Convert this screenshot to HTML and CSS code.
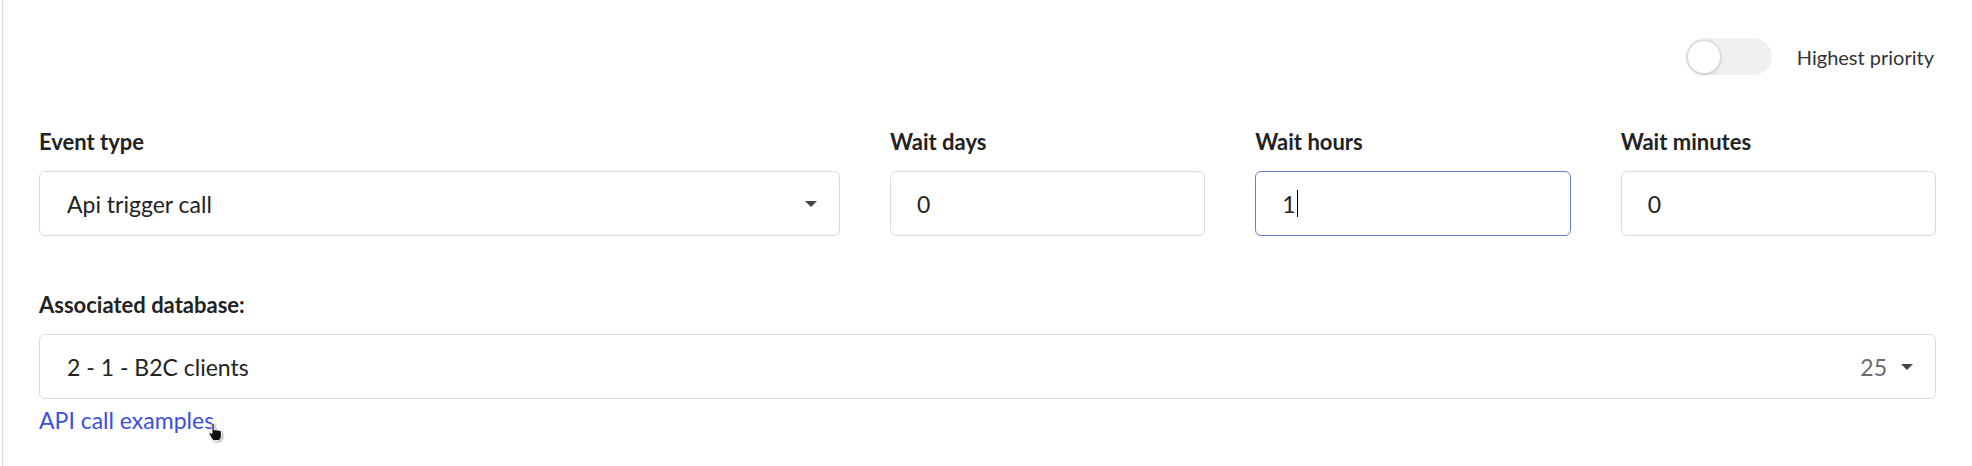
FILE: index.html
```html
<!DOCTYPE html>
<html lang="en">
<head>
  <meta charset="UTF-8" />
  <meta name="viewport" content="width=device-width, initial-scale=1.0"/>
  <title>Event settings</title>
  <link rel="stylesheet" href="styles.css">
</head>
<body>

  <div class="panel">
    <div class="priority-row">
      <div class="switch"><span class="knob"></span></div>
      <span class="switch-label">Highest priority</span>
    </div>

    <div class="event-grid">
      <div class="field">
        <label>Event type</label>
        <div class="box select">
          <span>Api trigger call</span>
          <span class="arrow"></span>
        </div>
      </div>
      <div class="field">
        <label>Wait days</label>
        <div class="box">0</div>
      </div>
      <div class="field">
        <label>Wait hours</label>
        <div class="box focused">1<span class="caret"></span></div>
      </div>
      <div class="field">
        <label>Wait minutes</label>
        <div class="box">0</div>
      </div>
    </div>

    <div class="field db-field">
      <label>Associated database:</label>
      <div class="box select">
        <span>2 - 1 - B2C clients</span>
        <span class="select-end"><span class="count">25</span><span class="arrow"></span></span>
      </div>
    </div>

    <div class="link-wrap">
      <a href="#" class="api-link">API call examples</a>
      <!-- mouse pointer from the screenshot -->
      <svg class="pointer" width="18" height="20" viewBox="0 0 18 20">
        <path d="M5.5 1.2c1 0 1.7.7 1.7 1.6v5.4c.6-.8 2-.8 2.5.1.7-.7 2.1-.5 2.5.4.8-.5 2.2 0 2.2 1.1v4c0 2.4-1.4 4.8-3.4 4.8H7.6c-1.3 0-2.2-.8-2.9-2L2.2 12.2c-.6-1 .6-2.2 1.7-1.4l1 .9V2.8c0-.9.3-1.6.6-1.6z"
              fill="#111" stroke="#fff" stroke-width="1" stroke-linejoin="round"/>
      </svg>
    </div>
  </div>

</body>
</html>
```

FILE: styles.css
```css
body {
  margin: 0;
  background: #fff;
  font-family: Lato, "Liberation Sans", sans-serif;
  color: #222;
}

.panel {
  margin-left: 2px;
  border-left: 1px solid #dcdcdc;
  height: 466px;
  box-sizing: border-box;
  padding: 38px 36px 0 36px;
}

/* toggle */
.priority-row {
  display: flex;
  justify-content: flex-end;
  align-items: center;
  gap: 25px;
  padding-right: 2px;
}

.switch {
  width: 86px;
  height: 37px;
  border-radius: 19px;
  background: #f0f0f0;
  display: flex;
  align-items: center;
}

.knob {
  width: 34px;
  height: 34px;
  border-radius: 50%;
  background: #fff;
  border: 1px solid #d8d8d8;
  box-sizing: border-box;
  box-shadow: 0 1px 3px rgba(0,0,0,0.18);
  margin-left: 1px;
}

.switch-label {
  font-size: 20px;
  color: #333;
}

/* fields */
.event-grid {
  display: grid;
  grid-template-columns: 801px repeat(3, 1fr);
  gap: 50px;
  margin-top: 54px;
}

.field label {
  display: block;
  font-size: 22px;
  line-height: 26px;
  font-weight: bold;
  color: #222;
  margin-bottom: 16px;
}

.box {
  height: 65px;
  box-sizing: border-box;
  border: 1px solid #dcdcdc;
  border-radius: 6px;
  padding: 0 26px;
  display: flex;
  align-items: center;
  font-size: 23px;
  line-height: 26px;
  color: #222;
}

.box.focused {
  border-color: #6a7bd6;
}

.caret {
  display: inline-block;
  width: 1px;
  height: 27px;
  background: #000;
  margin-left: 1px;
}

.select {
  justify-content: space-between;
  padding: 0 22px 0 27px;
}

.arrow {
  width: 0;
  height: 0;
  border-left: 6.5px solid transparent;
  border-right: 6.5px solid transparent;
  border-top: 6px solid #444;
}

.select-end {
  display: flex;
  align-items: center;
  gap: 14px;
}

.count {
  color: #6b6b6b;
}

.db-field {
  margin-top: 56px;
}

.link-wrap {
  position: relative;
  margin-top: 8px;
}

.api-link {
  font-size: 23px;
  line-height: 26px;
  color: #3b4fdc;
  text-decoration: none;
}

.pointer {
  position: absolute;
  left: 168px;
  top: 15px;
  filter: drop-shadow(1px 1px 1px rgba(0,0,0,0.35));
}
```
